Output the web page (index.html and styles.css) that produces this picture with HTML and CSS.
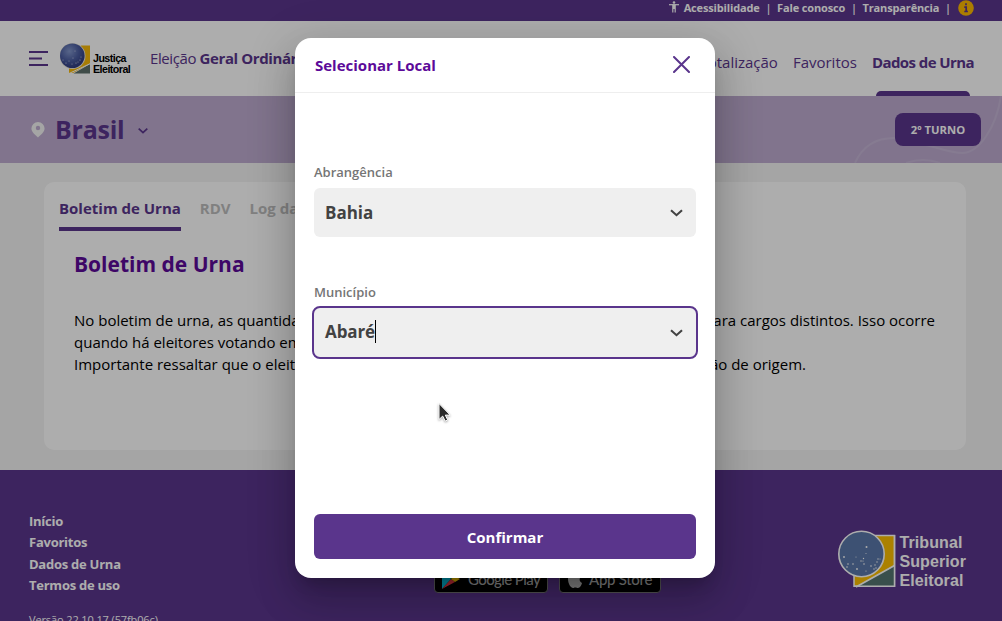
FILE: index.html
```
<!DOCTYPE html>
<html lang="pt-BR">
<head>
<meta charset="utf-8">
<title>Resultados - Selecionar Local</title>
<link rel="stylesheet" href="styles.css">
</head>
<body>
<div class="page">
  <div class="topbar">
    <svg class="access" width="12" height="12" viewBox="0 0 12 12"><circle cx="6" cy="1.500" r="1.300" fill="#fff"/><path d="M1 3.700h10" stroke="#fff" stroke-width="1.200"/><path d="M4.200 3.500h3.600v8H6.600V8H5.400v3.500H4.200Z" fill="#fff"/></svg>
    <span>Acessibilidade</span><span class="sep">|</span>
    <span>Fale conosco</span><span class="sep">|</span>
    <span>Transparência</span><span class="sep last">|</span>
    <svg class="info" width="16" height="16" viewBox="0 0 16 16"><circle cx="8" cy="8" r="7.800" fill="#fdb900"/><path d="M8 3.200v2M6.300 7.200H8.200v4M6.300 11.500h3.600" stroke="#5a358c" stroke-width="1.700" fill="none"/></svg>
  </div>
  <header class="header">
    <svg class="burger" width="19" height="16" viewBox="0 0 19 16"><path d="M0 1h19M0 7.500h13M0 14h19" stroke="#5a358c" stroke-width="2"/></svg>
    <div class="brand">
      <svg width="32" height="32" viewBox="0 0 32 32">
        <defs><radialGradient id="globe" cx=".38" cy=".32" r=".75"><stop offset="0" stop-color="#8296cb"/><stop offset=".5" stop-color="#4d5fa2"/><stop offset="1" stop-color="#2a3478"/></radialGradient></defs>
        <path d="M21 2.500h9v18L13 30H9v-7" fill="#f7b90a"/><path d="M30 21v9.500H13.500Z" fill="#5d706b"/><path d="M9 30.500 30.500 20.500" stroke="#fff" stroke-width="1"/>
        <circle cx="12.500" cy="13" r="13" fill="#ece9df"/><circle cx="12.300" cy="12.700" r="12.300" fill="url(#globe)"/>
        <g fill="#d5dcf0"><circle cx="3" cy="17" r=".5"/><circle cx="6" cy="20" r=".6"/><circle cx="9" cy="18" r=".5"/><circle cx="13" cy="15" r=".5"/><circle cx="15" cy="8" r=".5"/><circle cx="16" cy="20" r=".6"/><circle cx="20" cy="17" r=".6"/><circle cx="18" cy="19" r=".5"/><circle cx="21" cy="14" r=".5"/><circle cx="12" cy="21" r=".5"/></g>
      </svg>
      <div class="brand-text">Justiça<br>Eleitoral</div>
    </div>
    <div class="election">Eleição <b>Geral Ordinária</b></div>
    <nav class="nav"><a>Totalização</a><a>Favoritos</a><a class="active"><span>Dados de Urna</span></a></nav>
  </header>
  <section class="band">
    <svg class="pin" width="14" height="16" viewBox="0 0 14 16"><path fill-rule="evenodd" d="M7 0a6.600 6.600 0 0 0-6.600 6.600C.4 10.300 4.500 13 7 15.500c2.500-2.500 6.600-5.200 6.600-8.900A6.600 6.600 0 0 0 7 0Zm0 3.800a2.200 2.200 0 1 1 0 4.400 2.200 2.200 0 0 1 0-4.400Z" fill="#f3f3f3"/></svg>
    <h1>Brasil</h1>
    <svg class="band-chev" width="10" height="6" viewBox="0 0 10 6"><path d="m.7.700 4.300 4 4.300-4" fill="none" stroke="#5a358c" stroke-width="1.700"/></svg>
    <svg class="waves" width="152" height="67" viewBox="0 0 152 67"><path d="M5 67C13 49 28 42 44 42S95 57 112 57 146 32 151 0M56 67q17-6 34 0" fill="none" stroke="#c6b6d6" stroke-width="2"/></svg>
    <button class="turno">2º TURNO</button>
  </section>
  <main class="main">
    <article class="card">
      <div class="tabs"><span class="tab on">Boletim de Urna</span><span class="tab">RDV</span><span class="tab">Log da Urna</span></div>
      <h2>Boletim de Urna</h2>
      <div class="copy">
        <div class="line"><span>No boletim de urna, as quantidades</span><span>para cargos distintos. Isso ocorre</span></div>
        <div class="line"><span>quando há eleitores votando em</span></div>
        <div class="line third"><span>Importante ressaltar que o eleitor</span><span>seção de origem.</span></div>
      </div>
    </article>
  </main>
  <footer class="footer">
    <div class="links"><a>Início</a><a>Favoritos</a><a>Dados de Urna</a><a>Termos de uso</a><small>Versão 22.10.17 (57fb06c)</small></div>
    <div class="stores">
      <div class="store play"><svg width="18" height="20" viewBox="0 0 18 20"><path d="M0 0v20l9-10Z" fill="#00c8e8"/><path d="m0 0 9 10 4-3Z" fill="#00df76"/><path d="m0 20 9-10 4 3Z" fill="#f13b48"/><path d="m13 7 5 3-5 3-4-3Z" fill="#ffce00"/></svg><span>Google Play</span></div>
      <div class="store apple"><svg width="16" height="20" viewBox="0 0 16 20"><path d="M8 5C5 3 1 5 1 10s3 9 5 9c1 0 1-.6 2.200-.6S10 19 11 19c2 0 3.500-3 4-5-3-1.500-3-5-.5-7-2-3-4.500-3-6.500-2Z" fill="#bbb"/></svg><span>App Store</span></div>
    </div>
    <div class="tse">
      <svg width="58" height="58" viewBox="0 0 58 58">
        <path d="M16 5.500h40.500v50.800H16Z" fill="#fdbf00" stroke="#fff" stroke-width="1.500"/><path d="M56 36v20H20Z" fill="#557571"/><path d="M18 57 56.500 35.500" stroke="#fff" stroke-width="1.800"/><path d="M56.500 5v51.300H16" fill="none" stroke="#fff" stroke-width="1.500"/>
        <circle cx="23.500" cy="24" r="22.700" fill="#5a78aa" stroke="#fff" stroke-width="1.600"/>
        <g fill="#fff"><circle cx="28.500" cy="17" r="1"/><circle cx="28" cy="23.500" r=".5"/><circle cx="6" cy="27" r=".9"/><circle cx="9" cy="37" r=".8"/><circle cx="10" cy="34" r=".8"/><circle cx="15" cy="34" r=".8"/><circle cx="19" cy="39" r=".9"/><circle cx="18" cy="27" r=".5"/><circle cx="23" cy="31" r=".7"/><circle cx="25.500" cy="28.500" r=".7"/><circle cx="26" cy="34" r=".8"/><circle cx="25" cy="31" r=".6"/><circle cx="28" cy="41" r=".6"/><circle cx="33" cy="36" r=".8"/><circle cx="36" cy="39" r=".7"/><circle cx="37" cy="35" r=".7"/><circle cx="39" cy="32" r=".7"/><circle cx="40" cy="29" r=".7"/><circle cx="38" cy="38" r=".7"/><circle cx="42" cy="29" r=".5"/></g>
      </svg>
      <div class="tse-text">Tribunal<br>Superior<br>Eleitoral</div>
    </div>
  </footer>
</div>
<div class="scrim">
  <div class="dialog" role="dialog">
    <div class="dialog-head"><span>Selecionar Local</span><svg class="close" width="17" height="17" viewBox="0 0 17 17"><path d="m1 1 15 15M16 1 1 16" stroke="#5a358c" stroke-width="2" stroke-linecap="round"/></svg></div>
    <div class="dialog-body">
      <label>Abrangência</label>
      <div class="select"><span>Bahia</span><svg width="13" height="8" viewBox="0 0 13 8"><path d="m1 1.200 5.500 5 5.500-5" fill="none" stroke="#424242" stroke-width="2.100"/></svg></div>
      <label>Município</label>
      <div class="select focus"><span class="caret">Abaré</span><svg width="13" height="8" viewBox="0 0 13 8"><path d="m1 1.200 5.500 5 5.500-5" fill="none" stroke="#424242" stroke-width="2.100"/></svg></div>
      <button class="confirm">Confirmar</button>
    </div>
  </div>
</div>
<svg class="pointer" width="16" height="22" viewBox="0 0 16 22"><path d="M2 1.500v16l3.700-3.400 2.500 5 2.500-1.200-2.400-4.800h4.900Z" fill="#2b2b2b" stroke="#fff" stroke-width="1"/></svg>
</body>
</html>
```

FILE: styles.css
```
* { box-sizing: border-box; }
body { margin: 0; width: 1002px; height: 621px; overflow: hidden; font-family: "Open Sans", "Noto Sans", sans-serif; color: #000; position: relative; }
svg { display: block; flex: none; }
span, a, b { white-space: nowrap; }
button { border: 0; font-family: inherit; color: #fff; background: #5a358c; padding: 0; }
.page { height: 621px; overflow: hidden; background: #f3f3f3; }

.topbar { height: 21px; background: #5a358c; color: #fff; display: flex; justify-content: flex-end; padding-right: 28px; font-size: 11px; font-weight: 700; line-height: 16px; letter-spacing: -.15px; }
.access { margin: 1px 4px 0 0; }
.sep { margin: 0 5.7px 0 5.8px; font-weight: 600; }
.sep.last { margin-right: 7px; }

.header { height: 75px; background: #fff; color: #5a358c; display: flex; align-items: flex-start; padding-left: 29px; }
.burger { margin-top: 30px; }
.brand { display: flex; margin: 22px 0 0 12px; width: 90px; }
.brand-text { font: bold 10.7px/10.5px "Liberation Sans", Arial, sans-serif; color: #000; margin: 10px 0 0 1px; letter-spacing: -.55px; }
.election { font-size: 15px; line-height: 22px; margin-top: 26px; white-space: nowrap; letter-spacing: -.4px; }
.nav { margin-left: auto; padding-right: 28px; display: flex; gap: 15px; font-size: 15px; line-height: 22px; padding-top: 30px; height: 75px; }
.nav .active { font-weight: 700; display: flex; flex-direction: column; letter-spacing: -.58px; }
.nav .active::after { content: ""; margin: auto 4px 0; height: 5px; border-radius: 5px 5px 0 0; background: #5a358c; }

.band { height: 67px; background: #beacd0; display: flex; align-items: center; padding: 0 21px 0 31px; position: relative; }
.pin { margin-top: 1px; }
.band h1 { margin: 0 0 2px 10px; font-size: 25px; line-height: 34px; letter-spacing: -.25px; color: #5a358c; }
.band-chev { margin: 2px 0 0 14px; }
.waves { position: absolute; right: 0; top: 0; }
.turno { position: relative; margin-left: auto; width: 86px; height: 33px; border-radius: 8px; font-size: 11.3px; font-weight: 700; }

.main { height: 307px; padding: 19px 36px 20px 44px; }
.card { height: 268px; background: #fff; border-radius: 10px; padding: 14px 31px 0 15px; }
.tabs { display: flex; gap: 19px; color: #bdbdbd; font-size: 15px; font-weight: 700; line-height: 24px; }
.tab { height: 35px; }
.tab.on { color: #5a358c; border-bottom: 4px solid #5a358c; }
.card h2 { margin: 18px 0 0 15px; color: #5c0a99; font-size: 21px; line-height: 30px; }
.copy { margin: 30px 0 0 15px; font-size: 15px; line-height: 22px; }
.line { display: flex; justify-content: space-between; }
.third { padding-right: 129px; }

.footer { height: 151px; background: #5a358c; color: #fff; display: flex; padding: 0 36px 0 29px; }
.links { width: 405px; display: flex; flex-direction: column; padding-top: 41px; font-size: 13px; font-weight: 700; line-height: 21.400px; letter-spacing: -.25px; }
.links small { font-size: 11px; font-weight: 400; line-height: 16px; margin-top: 15px; letter-spacing: -.12px; }
.stores { display: flex; gap: 11px; padding-top: 87px; }
.store { height: 36px; border: 1px solid #777; border-radius: 4px; background: #000; color: #bbb; font: 500 15px/20px Lato, sans-serif; display: flex; align-items: flex-end; padding-bottom: 3px; letter-spacing: -.6px; }
.play { width: 114px; padding-left: 7px; gap: 8px; }
.apple { width: 102px; padding-left: 7px; gap: 6px; letter-spacing: -.3px; }
.tse { margin: 60px 0 0 auto; display: flex; gap: 3px; }
.tse-text { font: bold 16px/19px "Liberation Sans", Arial, sans-serif; margin-top: 3px; letter-spacing: .1px; }

.scrim { position: absolute; inset: 0; background: rgba(0,0,0,.32); padding: 38px 287px 43px 295px; }
.dialog { height: 540px; background: #fff; border-radius: 16px; box-shadow: 0 11px 15px -7px rgba(0,0,0,.2), 0 24px 38px 3px rgba(0,0,0,.14), 0 9px 46px 8px rgba(0,0,0,.12); }
.dialog-head { height: 55px; border-bottom: 1px solid #eee; display: flex; justify-content: space-between; align-items: center; padding: 0 25px 0 20px; color: #5c0a99; font-size: 15px; font-weight: 700; }
.close { margin-bottom: 1px; }
.dialog-body { padding: 69px 19px 0; display: flex; flex-direction: column; }
label { font-size: 13px; font-weight: 600; line-height: 20px; color: #757575; }
.select { height: 49px; margin: 6px 0 45px; background: #efefef; border-radius: 6px; display: flex; align-items: center; justify-content: space-between; padding: 0 13px 0 11px; color: #424242; font-size: 17px; font-weight: 700; }
.select.focus { outline: 2px solid #5a358c; }
.caret { border-right: 1px solid #000; margin: 0 0 3px; letter-spacing: -.1px; }
.confirm { height: 45px; border-radius: 6px; margin-top: 112px; font-size: 15px; font-weight: 700; }
.pointer { position: absolute; left: 437px; top: 402px; filter: drop-shadow(0 1px 1px rgba(0,0,0,.35)); }
```
